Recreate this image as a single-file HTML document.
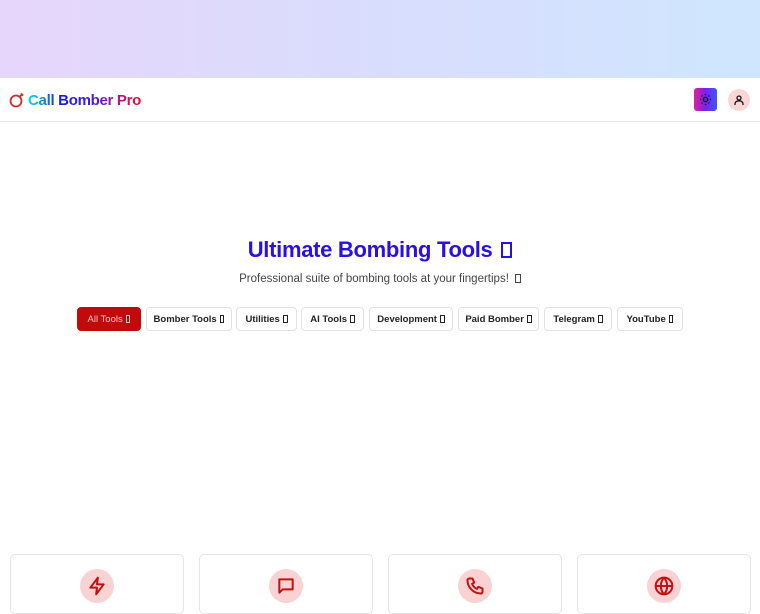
<!DOCTYPE html>
<html><head><meta charset="utf-8"><style>
*{margin:0;padding:0;box-sizing:border-box}
body{width:760px;height:600px;overflow:hidden;background:#fff;font-family:"Liberation Sans",sans-serif;position:relative}
.top{position:absolute;left:0;top:0;width:760px;height:78px;background:linear-gradient(90deg,#e6d6fb,#d9ddfd 50%,#cfe6fe)}
.hdr{position:absolute;left:0;top:78px;width:760px;height:44px;background:#fff;border-bottom:1px solid #e5e7eb}
.logo{position:absolute;left:28px;top:14px;font-size:15px;letter-spacing:-0.3px;font-weight:bold;background:linear-gradient(90deg,#00e5d0,#1a1ae6 30%,#4a1ae6 60%,#c0108a 80%,#e01030);-webkit-background-clip:text;color:transparent}
.tofu{display:inline-block;width:.5em;height:.75em;border:1px solid currentColor;vertical-align:-1px;margin-left:3px}
h1{position:absolute;left:0;width:760px;top:237px;text-align:center;font-size:22px;letter-spacing:-0.3px;font-weight:bold;color:#2a10e8}
.sub{position:absolute;left:0;width:760px;top:273px;text-align:center;font-size:11.5px;color:#444}
.tab{position:absolute;top:307px;height:24px;border:1px solid #e2e2e2;border-radius:4px;font-size:9.5px;font-weight:bold;color:#222;display:flex;align-items:center;justify-content:center;background:#fff}
.tab.a{background:#c20a0a;border-color:#c20a0a;color:#f3c8c8;font-weight:normal}
.card{position:absolute;top:554px;width:174px;height:60px;border:1px solid #e5e5e5;border-radius:5px}
.ic{position:absolute;left:69px;top:14px;width:34px;height:34px;border-radius:50%;background:#f9d3d3;display:flex;align-items:center;justify-content:center}
</style></head><body>
<div class="top"></div>
<div class="hdr">
<svg style="position:absolute;left:9px;top:14px" width="16" height="16" viewBox="0 0 16 16" fill="none" stroke="#d42a2a" stroke-width="1.8"><circle cx="7" cy="9" r="5.5"/><path d="M10.5 5l2.5-2.5M12 1.5l2 2"/></svg>
<div class="logo">Call Bomber Pro</div>
<div style="position:absolute;left:694px;top:10px;width:23px;height:23px;border-radius:3px;background:linear-gradient(90deg,#e0209a,#7a20f0,#3a5af8);display:flex;align-items:center;justify-content:center">
<svg width="13" height="13" viewBox="0 0 24 24" fill="none" stroke="#111" stroke-width="2.6"><circle cx="12" cy="12" r="4"/><path d="M12 2v2M12 20v2M2 12h2M20 12h2M4.9 4.9l1.4 1.4M17.7 17.7l1.4 1.4M4.9 19.1l1.4-1.4M17.7 6.3l1.4-1.4"/></svg></div>
<div style="position:absolute;left:728px;top:11px;width:22px;height:22px;border-radius:50%;background:#fad6d6;display:flex;align-items:center;justify-content:center">
<svg width="12" height="12" viewBox="0 0 24 24" fill="none" stroke="#111" stroke-width="2.6"><circle cx="12" cy="8" r="4"/><path d="M4 22v-2a6 6 0 0 1 6-6h4a6 6 0 0 1 6 6v2"/></svg></div>
</div>
<h1>Ultimate Bombing Tools <span class="tofu" style="border-width:2px"></span></h1>
<div class="sub">Professional suite of bombing tools at your fingertips! <span class="tofu"></span></div>
<div class="tab a" style="left:77px;width:64px">All Tools<span class="tofu"></span></div>
<div class="tab" style="left:146px;width:86px">Bomber Tools<span class="tofu"></span></div>
<div class="tab" style="left:236px;width:61px">Utilities<span class="tofu"></span></div>
<div class="tab" style="left:301px;width:63px">AI Tools<span class="tofu"></span></div>
<div class="tab" style="left:369px;width:84px">Development<span class="tofu"></span></div>
<div class="tab" style="left:458px;width:81px">Paid Bomber<span class="tofu"></span></div>
<div class="tab" style="left:544px;width:68px">Telegram<span class="tofu"></span></div>
<div class="tab" style="left:617px;width:66px">YouTube<span class="tofu"></span></div>
<div class="card" style="left:10px"><div class="ic"><svg width="20" height="20" viewBox="0 0 24 24" fill="none" stroke="#c41010" stroke-width="2.4" stroke-linejoin="round"><path d="M13 2L4 14h8l-1 8 9-12h-8z"/></svg></div></div>
<div class="card" style="left:199px"><div class="ic"><svg width="20" height="20" viewBox="0 0 24 24" fill="none" stroke="#c41010" stroke-width="2.4" stroke-linejoin="round"><path d="M4 4h16v12H8l-4 4z"/></svg></div></div>
<div class="card" style="left:388px"><div class="ic"><svg width="20" height="20" viewBox="0 0 24 24" fill="none" stroke="#c41010" stroke-width="2.4" stroke-linejoin="round"><path d="M5 3h4l2 5-2.5 1.5a11 11 0 0 0 6 6L16 13l5 2v4a2 2 0 0 1-2 2A16 16 0 0 1 3 5a2 2 0 0 1 2-2z"/></svg></div></div>
<div class="card" style="left:577px"><div class="ic"><svg width="20" height="20" viewBox="0 0 24 24" fill="none" stroke="#c41010" stroke-width="2.4"><circle cx="12" cy="12" r="10"/><path d="M2 12h20M12 2a15 15 0 0 1 0 20M12 2a15 15 0 0 0 0 20"/></svg></div></div>
</body></html>
